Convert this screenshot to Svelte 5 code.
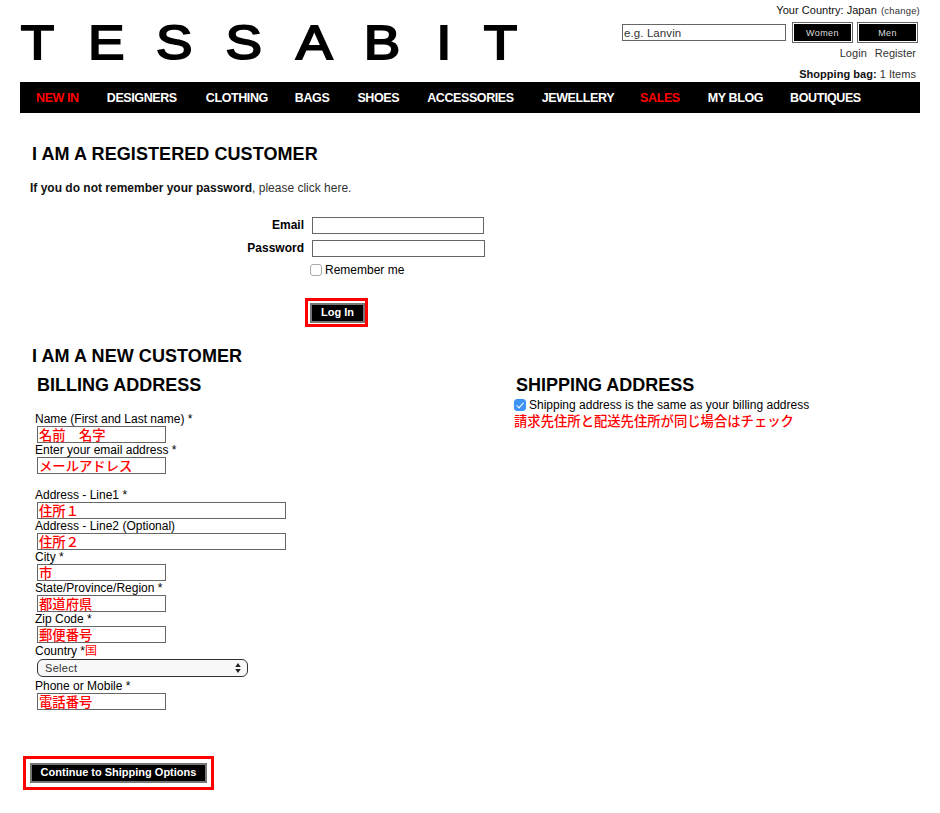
<script>
  const navItems = [
    { label: 'NEW IN', red: true }, { label: 'DESIGNERS' }, { label: 'CLOTHING' }, { label: 'BAGS' },
    { label: 'SHOES' }, { label: 'ACCESSORIES' }, { label: 'JEWELLERY' }, { label: 'SALES', red: true },
    { label: 'MY BLOG' }, { label: 'BOUTIQUES' }
  ];
  const logo = ['T', 'E', 'S', 'S', 'A', 'B', 'I', 'T'];
  const groupA = [
    { label: 'Name (First and Last name) *', value: '名前　名字' },
    { label: 'Enter your email address *', value: 'メールアドレス' }
  ];
  const groupB = [
    { label: 'Address - Line1 *', value: '住所１', wide: true },
    { label: 'Address - Line2 (Optional)', value: '住所２', wide: true },
    { label: 'City *', value: '市' },
    { label: 'State/Province/Region *', value: '都道府県' },
    { label: 'Zip Code *', value: '郵便番号' }
  ];
</script>

<div class="page">
  <header class="head">
    <div class="logo">{#each logo as l}<span>{l}</span>{/each}</div>
    <div class="tools">
      <div class="country">Your Country: Japan <small>(change)</small></div>
      <div class="search">
        <input class="q" type="text" placeholder="e.g. Lanvin" />
        <button class="g">Women</button>
        <button class="g">Men</button>
      </div>
      <div class="auth"><a href="#a">Login</a><a href="#r">Register</a></div>
      <div class="bag"><b>Shopping bag:</b> 1 Items</div>
    </div>
  </header>

  <nav class="nav">
    {#each navItems as item}
      <a href="#n" class:red={item.red}>{item.label}</a>
    {/each}
  </nav>

  <main>
    <h2 class="h-reg">I AM A REGISTERED CUSTOMER</h2>
    <p class="forgot"><b>If you do not remember your password</b>, please click here.</p>

    <div class="login">
      <div class="row"><label for="em">Email</label><input id="em" class="i-email" type="text" /></div>
      <div class="row r2"><label for="pw">Password</label><input id="pw" class="i-pass" type="password" /></div>
      <div class="remember"><input id="rm" type="checkbox" class="cb" /><label for="rm">Remember me</label></div>
      <div class="login-btn"><div class="mark m-log"><button class="act b-log">Log In</button></div></div>
    </div>

    <h2 class="h-new">I AM A NEW CUSTOMER</h2>

    <div class="cols">
      <section class="bill">
        <h2 class="h-bill">BILLING ADDRESS</h2>
        <div class="group">
          {#each groupA as f}
            <div class="field">
              <label for={f.label}>{f.label}</label>
              <input id={f.label} type="text" value={f.value} />
            </div>
          {/each}
        </div>
        <div class="group second">
          {#each groupB as f}
            <div class="field">
              <label for={f.label}>{f.label}</label>
              <input id={f.label} class:wide={f.wide} type="text" value={f.value} />
            </div>
          {/each}
          <div class="field">
            <label for="ct">Country *<span class="jp">国</span></label>
            <div class="sel">
              <select id="ct"><option>Select</option></select>
              <svg width="6" height="10" viewBox="0 0 6 10"><path d="M3 0 5.8 4H.2zM3 10 .2 6H5.8z" fill="#222"/></svg>
            </div>
          </div>
          <div class="field">
            <label for="ph">Phone or Mobile *</label>
            <input id="ph" type="text" value="電話番号" />
          </div>
        </div>
        <div class="mark cont"><button class="act b-cont">Continue to Shipping Options</button></div>
      </section>

      <section class="ship">
        <h2 class="h-ship">SHIPPING ADDRESS</h2>
        <div class="same"><input id="sm" type="checkbox" class="cb blue" checked /><label for="sm">Shipping address is the same as your billing address</label></div>
        <p class="note">請求先住所と配送先住所が同じ場合はチェック</p>
      </section>
    </div>
  </main>
</div>

<style>
  :global(body) { margin: 0; background: #fff; }
  .page {
    width: 900px; margin: 0 20px; height: 813px; overflow: hidden;
    font-family: "Liberation Sans", Arial, sans-serif; font-size: 12px; color: #000;
  }
  .head { display: flex; justify-content: space-between; height: 82px; }
  .logo { display: flex; margin-left: -17.5px; padding-top: 13px; height: 60px; font-size: 48px; line-height: 60px; -webkit-text-stroke: 1.9px #000; }
  .logo span { display: block; text-align: center; transform: scaleX(1.14); }
  .logo span:nth-child(1) { width: 69px; }
  .logo span:nth-child(2) { width: 68.5px; }
  .logo span:nth-child(3) { width: 68.75px; }
  .logo span:nth-child(4) { width: 69.75px; }
  .logo span:nth-child(5) { width: 70.5px; }
  .logo span:nth-child(6) { width: 66px; }
  .logo span:nth-child(7) { width: 57.75px; }
  .logo span:nth-child(8) { width: 55px; }
  .tools { display: flex; flex-direction: column; align-items: flex-end; width: 300px; color: #333; font-size: 11px; letter-spacing: .03px; }
  .country { height: 14px; margin-top: 3px; color: #111; line-height: 14px; }
  .country small { font-size: 9.5px; color: #333; letter-spacing: .2px; margin-left: 1px; }
  .search { display: flex; align-items: center; margin-top: 5px; margin-right: 2px; gap: 4px; }
  .q { box-sizing: border-box; width: 164px; height: 17px; margin-right: 2px; padding: 0 1px; border: 1px solid #666; font: 11.5px "Liberation Sans", sans-serif; letter-spacing: .1px; }
  .q::placeholder { color: #333; opacity: 1; }
  .g { box-sizing: border-box; width: 61px; height: 21px; padding: 0; background: #000; color: #ddd; border: 2px solid #fff; outline: 1px solid #666; outline-offset: -1px; font: 9px "Liberation Sans", sans-serif; letter-spacing: .4px; }
  .auth { display: flex; gap: 8px; margin-top: 3px; margin-right: 4px; line-height: 14px; }
  .auth a, .forgot { color: #333; text-decoration: none; }
  .bag { margin-top: 7px; margin-right: 4px; line-height: 14px; }
  .bag b { color: #111; }

  .nav { display: flex; gap: 28px; height: 31px; padding-left: 16px; align-items: center; background: #000; }
  .nav a { color: #fff; font-weight: 700; font-size: 12.5px; letter-spacing: -.4px; text-decoration: none; }
  .nav a.red { color: #f00; }
  .nav a:nth-child(3) { margin-left: 1px; margin-right: -1px; }
  .nav a:nth-child(8) { margin-left: -2px; }
  .nav a:nth-child(10) { margin-left: -1px; }

  h2 { margin: 0; font-size: 18px; line-height: 20px; font-weight: 700; color: #000; }
  .h-reg { margin: 31px 0 0 12px; letter-spacing: .08px; }
  .forgot { margin: 17px 0 0 10px; line-height: 14px; font-size: 12px; }
  .forgot b { color: #111; }
  .login { margin-top: 22px; }
  .row { display: flex; align-items: center; gap: 8px; height: 17px; }
  .r2 { margin-top: 6px; }
  .row label { width: 284px; margin-bottom: 2px; text-align: right; font-weight: 700; }
  .row input { box-sizing: border-box; height: 17px; border: 1px solid #666; padding: 0; }
  .i-email { width: 172px; }
  .i-pass { width: 173px; }
  .remember { display: flex; align-items: center; margin: 6px 0 0 290px; height: 14px; }
  .remember label { margin-left: 3px; }
  .cb { appearance: none; box-sizing: border-box; margin: 0; width: 12px; height: 12px; border: 1px solid #aaa; border-radius: 3px; background: #fff; position: relative; }
  .blue { background: #3d94f6; border-color: #3d94f6; }
  .blue::after { content: ""; position: absolute; left: 3px; top: 1px; width: 3px; height: 6px; border: solid #fff; border-width: 0 1.5px 1.5px 0; transform: rotate(42deg); }
  .login-btn { margin: 21px 0 0 285px; }
  .mark { display: inline-flex; border: 3px solid #f00; background: #fff; }
  .m-log { padding: 2px 0 1px 2px; }
  .act { box-sizing: border-box; height: 20px; padding: 0 0 2px; background: #000; color: #fff; border: 2px solid #767676; font: 700 11px "Liberation Sans", sans-serif; }
  .b-log { width: 55px; }
  .b-cont { width: 177px; }
  .h-new { margin: 19px 0 0 12px; letter-spacing: .08px; }
  .cols { display: flex; }
  .bill { width: 479px; }
  .h-bill { margin: 9px 0 0 17px; }
  .group { margin: 17px 0 0 15px; }
  .second { margin-top: 14px; }
  .field { display: flex; flex-direction: column; align-items: flex-start; }
  .field label { height: 14px; line-height: 14px; }
  .field input { box-sizing: border-box; width: 129px; height: 17px; margin-left: 2px; padding: 0 1px; border: 1px solid #666; color: #f00; font: 500 13.33px "Noto Sans CJK JP", sans-serif; }
  .field input.wide { width: 249px; }
  .jp { color: #f00; font-family: "Noto Sans CJK JP", sans-serif; font-size: 12px; }
  .sel { position: relative; margin: 2px 0 2px 2px; width: 211px; height: 18px; }
  .sel select { appearance: none; box-sizing: border-box; width: 100%; height: 18px; padding: 0 7px; border: 1px solid #333; border-radius: 6px; background: #f8f8f8; color: #333; font: 11px "Liberation Sans", sans-serif; letter-spacing: .3px; }
  .sel svg { position: absolute; right: 7px; top: 4px; }
  .cont { margin: 46px 0 0 3px; padding: 4px 4px 4px; }
  .ship { padding-top: 9px; }
  .h-ship { margin-left: 17px; }
  .same { display: flex; align-items: center; margin: 3px 0 0 15px; height: 14px; }
  .same label { margin-left: 3px; }
  .note { margin: 0 0 0 15px; color: #f00; font: 500 13.33px/18px "Noto Sans CJK JP", sans-serif; }
</style>
